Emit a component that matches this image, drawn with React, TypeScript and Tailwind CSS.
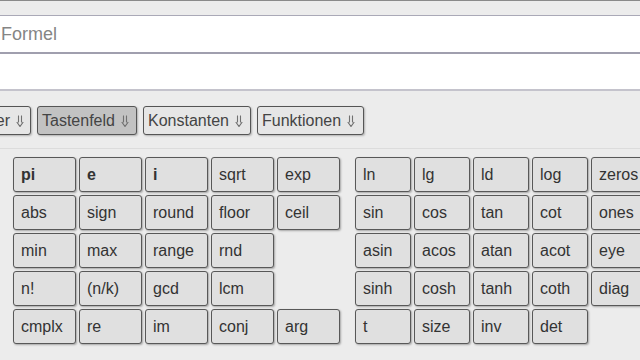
import React from "react";

const LEFT_KEYS: (string | null)[][] = [
  ["pi", "e", "i", "sqrt", "exp"],
  ["abs", "sign", "round", "floor", "ceil"],
  ["min", "max", "range", "rnd", null],
  ["n!", "(n/k)", "gcd", "lcm", null],
  ["cmplx", "re", "im", "conj", "arg"],
];

const RIGHT_KEYS: (string | null)[][] = [
  ["ln", "lg", "ld", "log", "zeros"],
  ["sin", "cos", "tan", "cot", "ones"],
  ["asin", "acos", "atan", "acot", "eye"],
  ["sinh", "cosh", "tanh", "coth", "diag"],
  ["t", "size", "inv", "det", null],
];

const BOLD = ["pi", "e", "i"];

const Key: React.FC<{ label: string | null; width: string }> = ({ label, width }) =>
  label === null ? (
    <div className={`${width} h-[35px]`} />
  ) : (
    <button
      className={`${width} h-[35px] shrink-0 flex items-center pl-[7px] rounded-[3px] border border-[#585858] bg-[#e0e0e0] text-[16px] text-[#333] shadow-[1px_1px_2px_rgba(0,0,0,0.3)] whitespace-nowrap overflow-hidden ${
        BOLD.includes(label) ? "font-bold" : ""
      }`}
    >
      {label}
    </button>
  );

const KeyBlock: React.FC<{ rows: (string | null)[][]; width: string }> = ({ rows, width }) => (
  <div className="flex flex-col gap-[3px] shrink-0">
    {rows.map((row, r) => (
      <div key={r} className="flex gap-[3px]">
        {row.map((k, c) => (
          <Key key={c} label={k} width={width} />
        ))}
      </div>
    ))}
  </div>
);

// double down arrow (⇓) drawn small and grey like the reference
const DownArrow = () => (
  <svg width="8" height="12" viewBox="0 0 8 12" className="ml-[6px] shrink-0" fill="none">
    <path d="M2.5 0.5V7.5M5.5 0.5V7.5" stroke="#707070" strokeWidth="1.1" />
    <path d="M0.8 7L4 11.5L7.2 7" stroke="#707070" strokeWidth="1.2" strokeLinejoin="round" />
  </svg>
);

const TabButton: React.FC<{ label: string; width: string; active?: boolean; alignEnd?: boolean }> = ({
  label,
  width,
  active,
  alignEnd,
}) => (
  <button
    className={`${width} h-[29px] shrink-0 flex items-center ${
      alignEnd ? "justify-end pr-[6px]" : "justify-start pl-[4px]"
    } rounded-[3px] border border-[#555] text-[16px] text-[#444] whitespace-nowrap overflow-hidden shadow-[1px_1px_2px_rgba(0,0,0,0.25)] ${
      active ? "bg-[#c2c2c2]" : "bg-[#e6e6e6]"
    }`}
  >
    {label}
    <DownArrow />
  </button>
);

export default function App() {
  return (
    <div className="w-[640px] h-[360px] overflow-hidden bg-[#ececec] font-['Liberation_Sans',Arial,sans-serif]">
      <div className="h-[15px] border-t border-[#8a8a8a]" />
      <div className="h-[39px] bg-white border-t border-b-2 border-t-[#aaa9b7] border-b-[#a09fae] flex items-center pl-[1px]">
        <span className="text-[18px] text-[#858585]">Formel</span>
      </div>
      <div className="h-[37px] bg-white border-b-2 border-[#c4c3cc]" />

      <div className="mt-[15px] flex gap-[6px] ml-[-49px]">
        <TabButton label="Rechner" width="w-[80px]" alignEnd />
        <TabButton label="Tastenfeld" width="w-[100px]" active />
        <TabButton label="Konstanten" width="w-[108px]" />
        <TabButton label="Funktionen" width="w-[107px]" />
      </div>

      <div className="mt-[13px] border-t border-[#dcdcdc]" />

      <div className="mt-[8px] ml-[13px] flex gap-[15px]">
        <KeyBlock rows={LEFT_KEYS} width="w-[63px]" />
        <KeyBlock rows={RIGHT_KEYS} width="w-[56px]" />
      </div>
    </div>
  );
}
